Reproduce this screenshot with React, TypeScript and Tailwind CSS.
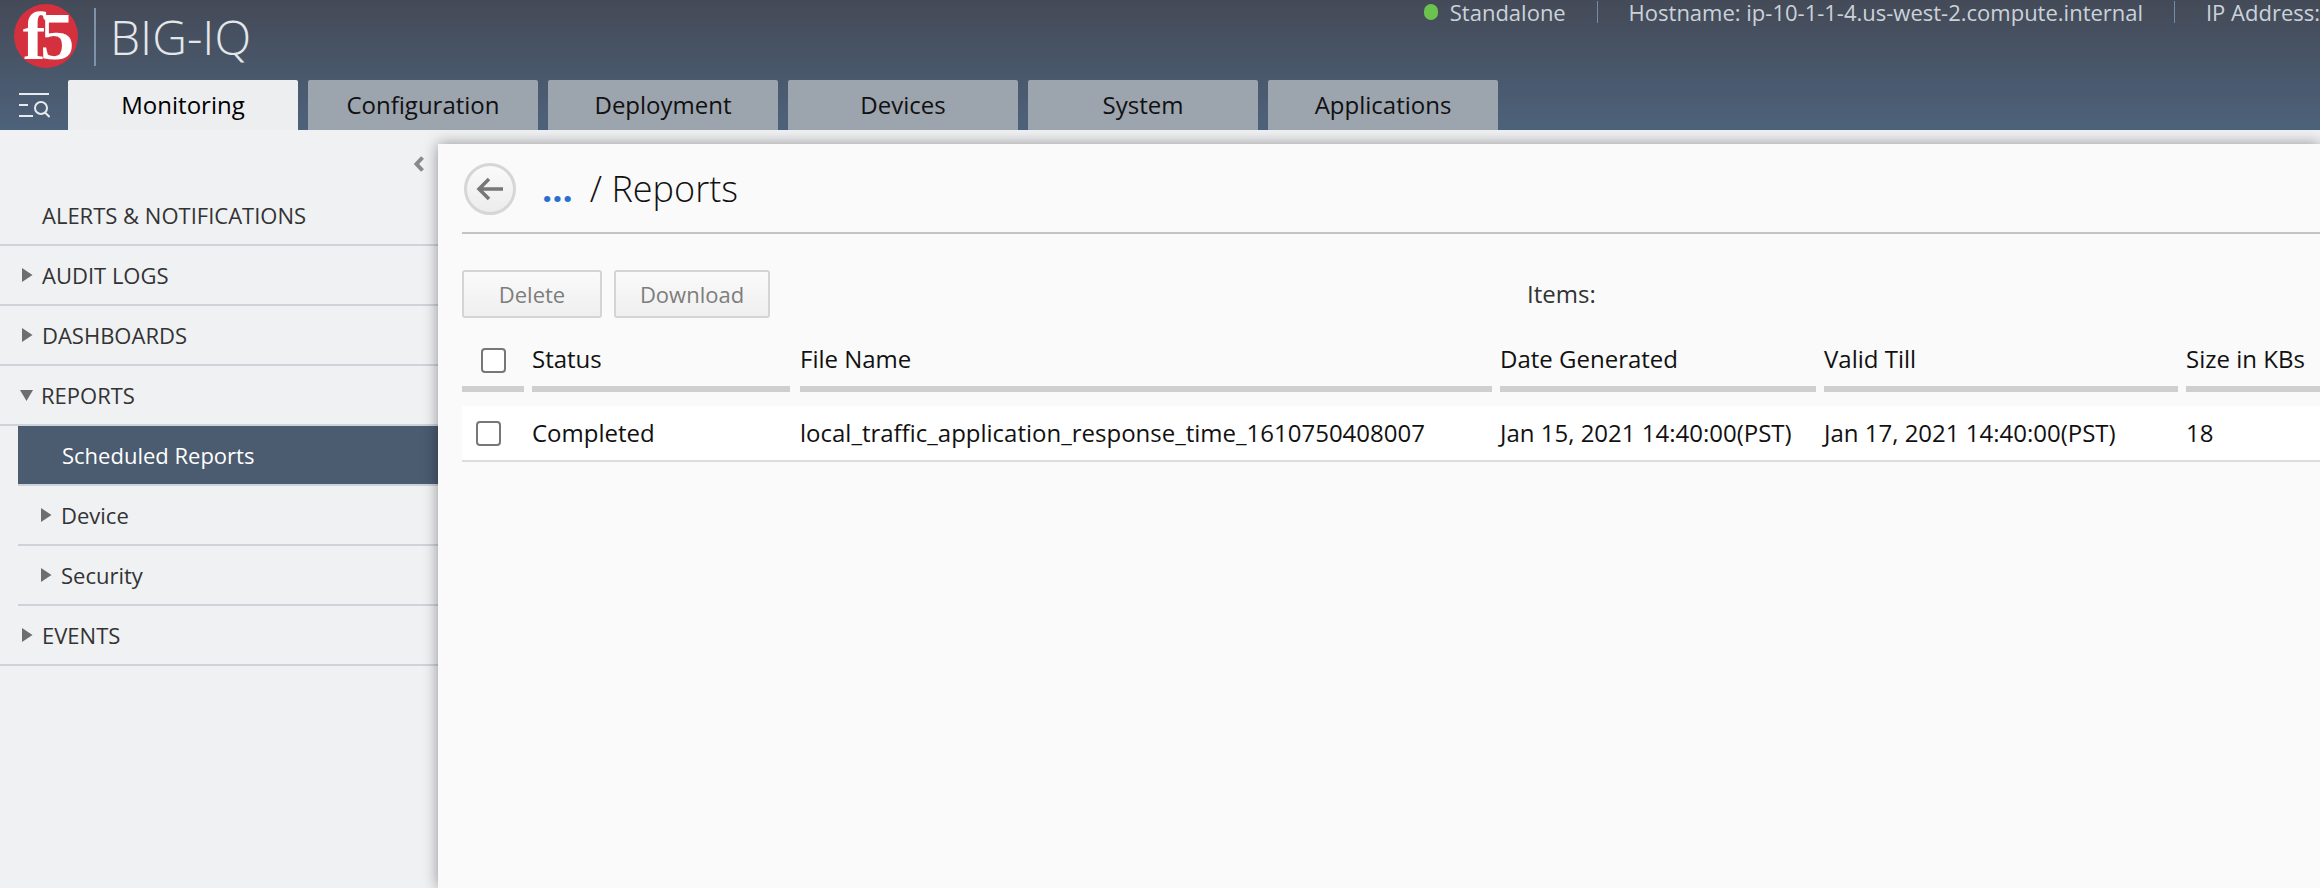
import React from 'react';

const tabs = ['Monitoring', 'Configuration', 'Deployment', 'Devices', 'System', 'Applications'];

const Caret = ({ open = false }: { open?: boolean }) =>
  open ? (
    <svg width="13" height="11" viewBox="0 0 13 11" className="shrink-0 -ml-px mr-[-1px]">
      <path d="M0 0h13L6.500 11z" fill="#6e6e6e" />
    </svg>
  ) : (
    <svg width="12" height="14" viewBox="0 0 12 14" className="shrink-0">
      <path d="M1 0l10.500 7L1 14z" fill="#6e6e6e" />
    </svg>
  );

const NavRow = ({ label, sub = false, open = false, plain = false }: { label: string; sub?: boolean; open?: boolean; plain?: boolean }) => (
  <div className={`flex h-[60px] items-center border-b-2 border-[#cdd3d9] ${sub ? 'ml-[18px] pl-[22px]' : 'pl-[21px]'}`}>
    {plain ? <span className="w-[21px]" /> : <Caret open={open} />}
    <span className={`text-[22px] text-[#333] ${plain ? '' : 'ml-[9px]'}`}>{label}</span>
  </div>
);

const Checkbox = () => <div className="h-[25px] w-[25px] rounded-[4px] border-2 border-[#777] bg-white" />;

const columns = [
  { label: 'Status', value: 'Completed', w: 'w-[268px]', gap: 'mr-[10px]' },
  { label: 'File Name', value: 'local_traffic_application_response_time_1610750408007', w: 'w-[700px]', gap: 'mr-2' },
  { label: 'Date Generated', value: 'Jan 15, 2021 14:40:00(PST)', w: 'w-[324px]', gap: 'mr-2' },
  { label: 'Valid Till', value: 'Jan 17, 2021 14:40:00(PST)', w: 'w-[362px]', gap: 'mr-2' },
  { label: 'Size in KBs', value: '18', w: 'w-[200px]', gap: '' },
];

export default function App() {
  return (
    <div className="flex h-screen flex-col overflow-hidden whitespace-nowrap bg-[#f0f1f3] font-['Open_Sans',sans-serif]">
      {/* Header */}
      <div className="h-[130px] shrink-0 bg-gradient-to-b from-[#444a57] to-[#4d627b]">
        <div className="flex h-[80px]">
          <div className="flex h-[80px] items-start pl-[14px] pt-[4px]">
            <div className="flex h-[64px] w-[64px] items-center justify-center rounded-full bg-[#d5303e] font-['Liberation_Serif',serif] text-[68px] font-bold leading-[60px] tracking-[-5px] text-white">
              f5
            </div>
            <div className="ml-[16px] mt-[4px] h-[58px] w-[2px] bg-[#7e93aa]" />
            <div className="ml-[14px] mt-[-1px] text-[48px] font-light leading-[68px] text-[#e4e7ea]">BIG-IQ</div>
          </div>
          <div className="ml-auto flex h-[24px] w-[896px] shrink-0 items-center text-[22px] leading-[24px] text-[#cbd2da]">
            <span className="h-[16px] w-[16px] rounded-full bg-[#6cc24f]" />
            <span className="ml-[12px]">Standalone</span>
            <span className="ml-[31px] h-[22px] w-px bg-[#6f8cab]" />
            <span className="ml-[31px]">Hostname: ip-10-1-1-4.us-west-2.compute.internal</span>
            <span className="ml-[31px] h-[22px] w-px bg-[#6f8cab]" />
            <span className="ml-[31px]">IP Address:</span>
          </div>
        </div>
        <div className="flex h-[50px]">
          <div className="flex w-[68px] items-center justify-center">
            <svg width="32" height="28" viewBox="0 0 32 28" fill="none" stroke="#e8ebee" strokeWidth="2">
              <path d="M1 3h30M1 14h9M1 25h14" />
              <circle cx="23" cy="17" r="6" />
              <path d="M27 21.500l4.500 4.500" />
            </svg>
          </div>
          <div className="flex gap-[10px]">
            {tabs.map((t, i) => (
              <div
                key={t}
                className={`flex w-[230px] items-center justify-center rounded-t-[2px] text-[24px] ${i === 0 ? 'bg-[#eceef0] text-black' : 'bg-[#9ca4ae] text-[#111]'}`}
              >
                {t}
              </div>
            ))}
          </div>
        </div>
      </div>

      <div className="flex min-h-0 flex-1">
        {/* Sidebar */}
        <div className="w-[438px] shrink-0 pt-[28px]">
          <div className="flex h-[12px] items-center justify-end pr-[13px]">
            <svg width="12" height="16" viewBox="0 0 12 16">
              <path d="M9.500 1.500L3.500 8l6 6.500" fill="none" stroke="#8a8a8a" strokeWidth="4" />
            </svg>
          </div>
          <div className="mt-[16px]">
            <NavRow label="ALERTS & NOTIFICATIONS" plain />
            <NavRow label="AUDIT LOGS" />
            <NavRow label="DASHBOARDS" />
            <NavRow label="REPORTS" open />
            <div className="ml-[18px] flex h-[60px] items-center border-b-2 border-[#cdd3d9] bg-[#4b5b70] pl-[44px] text-[22px] text-white">
              Scheduled Reports
            </div>
            <NavRow label="Device" sub />
            <NavRow label="Security" sub />
            <NavRow label="EVENTS" />
          </div>
        </div>

        {/* Main panel */}
        <div className="relative z-10 mt-[14px] min-w-0 flex-1 bg-[#fafafa] pl-[24px] shadow-[0_0_14px_rgba(0,0,0,0.4)]">
          <div className="flex h-[90px] items-center border-b-2 border-[#c4c4c4] pt-[2px]">
            <div className="ml-[2px] flex h-[52px] w-[52px] items-center justify-center rounded-full border-[3px] border-[#d6d6d6] bg-gradient-to-b from-[#fafafa] to-[#ececec]">
              <svg width="28" height="24" viewBox="0 0 28 24" fill="none" stroke="#777" strokeWidth="3.500">
                <path d="M27 12H3M13 2L3 12l10 10" />
              </svg>
            </div>
            <span className="ml-[26px] text-[36px] font-bold leading-none text-[#2a6fcf]">...</span>
            <span className="ml-[17px] text-[36px] font-light text-[#111]">/ Reports</span>
          </div>

          <div className="mt-[36px] flex h-[48px] items-center">
            <button className="h-[48px] w-[140px] rounded-[3px] border-2 border-[#d4d4d4] bg-gradient-to-b from-[#fafafa] to-[#efefef] text-[22px] text-[#7d7d7d]">
              Delete
            </button>
            <button className="ml-[12px] h-[48px] w-[156px] rounded-[3px] border-2 border-[#d4d4d4] bg-gradient-to-b from-[#fafafa] to-[#efefef] text-[22px] text-[#7d7d7d]">
              Download
            </button>
            <span className="ml-[757px] text-[24px] text-[#333]">Items:</span>
          </div>

          {/* Table */}
          <div className="mt-[30px] flex">
            <div className="mr-2 w-[62px] shrink-0">
              <div className="flex h-[38px] items-start justify-center">
                <Checkbox />
              </div>
              <div className="h-[6px] bg-[#cfcfcf]" />
            </div>
            {columns.map((c) => (
              <div key={c.label} className={`${c.w} shrink-0`}>
                <div className="h-[38px] text-[24px] leading-[22px] text-[#111]">{c.label}</div>
                <div className={`h-[6px] bg-[#cfcfcf] ${c.gap}`} />
              </div>
            ))}
          </div>
          <div className="mt-[14px] flex h-[56px] items-center border-b-2 border-[#dcdcdc] bg-white">
            <div className="mr-2 w-[62px] shrink-0 pl-[14px]">
              <Checkbox />
            </div>
            {columns.map((c) => (
              <div key={c.label} className={`${c.w} shrink-0 text-[24px] text-[#111]`}>
                {c.value}
              </div>
            ))}
          </div>
        </div>
      </div>
    </div>
  );
}
